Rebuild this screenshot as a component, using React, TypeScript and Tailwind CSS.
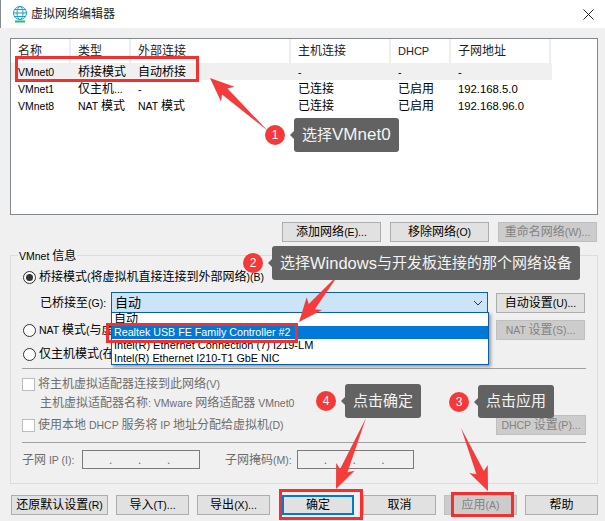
import React from 'react';

const rows = [
  ['VMnet0', '桥接模式', '自动桥接', '-', '-', '-'],
  ['VMnet1', '仅主机...', '-', '已连接', '已启用', '192.168.5.0'],
  ['VMnet8', 'NAT 模式', 'NAT 模式', '已连接', '已启用', '192.168.96.0'],
];

const headers = ['名称', '类型', '外部连接', '主机连接', 'DHCP', '子网地址'];
const colWidths = ['w-[60px]', 'w-[60px]', 'w-[160px]', 'w-[100px]', 'w-[60px]', 'w-[100px]'];

// latin runs render narrower than the CJK around them in the reference
const mix = (text: string) =>
  text.split(/([\x20-\x7e]+)/).map((part, i) =>
    i % 2 === 1 ? (
      <span key={i} className="text-[10.5px]">
        {part}
      </span>
    ) : (
      part
    )
  );

const Btn = ({ label, className = '', disabled = false }: { label: string; className?: string; disabled?: boolean }) => (
  <div
    className={`flex items-center justify-center border whitespace-pre shrink-0 ${
      disabled ? 'bg-[#cccccc] border-[#bfbfbf] text-[#838383]' : 'bg-[#e1e1e1] border-[#adadad] text-black'
    } ${className}`}
  >
    <span>{mix(label)}</span>
  </div>
);

const Radio = ({ checked = false }: { checked?: boolean }) => (
  <span className="w-[13px] h-[13px] rounded-full border border-[#333333] bg-white flex items-center justify-center shrink-0">
    {checked && <span className="w-[7px] h-[7px] rounded-full bg-[#333333]" />}
  </span>
);

const Check = () => <span className="w-[13px] h-[13px] border border-[#bcbcbc] bg-white shrink-0" />;

const IpInput = ({ className = '' }: { className?: string }) => (
  <div className={`h-[19px] border border-[#7a7a7a] bg-[#f0f0f0] grid grid-cols-4 text-[#6d6d6d] ${className}`}>
    <span />
    <span className="-ml-[3px] leading-[19px]">.</span>
    <span className="-ml-[3px] leading-[19px]">.</span>
    <span className="-ml-[3px] leading-[19px]">.</span>
  </div>
);

const arrow = (x0: number, y0: number, x1: number, y1: number) => {
  const len = Math.hypot(x1 - x0, y1 - y0);
  const ux = (x1 - x0) / len;
  const uy = (y1 - y0) / len;
  const nx = -uy;
  const ny = ux;
  const pt = (back: number, side: number) => `${x1 - ux * back + nx * side},${y1 - uy * back + ny * side}`;
  return [`${x0},${y0}`, pt(20, 4), pt(24, 10), `${x1},${y1}`, pt(24, -10), pt(20, -4)].join(' ');
};

const Bubble = ({ n, children, className }: { n: number; children: React.ReactNode; className: string }) => (
  <div className={`absolute flex items-center ${className}`}>
    <span className="w-[20px] h-[20px] rounded-full bg-[#f53838] text-white text-[12px] flex items-center justify-center shrink-0">
      {n}
    </span>
    <span className="ml-[5px] w-0 h-0 border-y-[4px] border-y-transparent border-r-[4px] border-r-[#626262]" />
    <span className="h-full flex items-center px-[8px] rounded-[3px] bg-[#626262] text-[#f4f4f4] text-[15px] whitespace-nowrap">
      {children}
    </span>
  </div>
);

export default function App() {
  return (
    <div className="relative w-[605px] h-[521px] overflow-hidden bg-[#f0f0f0] text-[12px] text-black font-['Liberation_Sans','Noto_Sans_CJK_SC',sans-serif]">
      {/* Title bar */}
      <div className="h-[28px] bg-white flex items-center pl-[11px] pr-[11px] border-l border-[#8a8a8a]">
        <svg width="16" height="17" viewBox="0 0 16 17" fill="none" stroke="#1a9fc9" strokeWidth="1">
          <circle cx="8" cy="7" r="6.5" />
          <ellipse cx="8" cy="7" rx="3" ry="6.5" />
          <path d="M1.5 7h13M2.5 3.5h11M2.5 10.5h11" />
          <path d="M3 15.5h10" stroke="#2bb673" strokeWidth="2" />
        </svg>
        <span className="ml-[3px] text-[12px] text-[#222222]">虚拟网络编辑器</span>
        <svg className="ml-auto" width="11" height="11" viewBox="0 0 11 11" stroke="#222222" strokeWidth="1">
          <path d="M0.5 0.5l10 10M10.5 0.5l-10 10" />
        </svg>
      </div>

      <div className="pl-[10px] pr-[7px] pt-[10px]">
        {/* Network list */}
        <div className="h-[177px] border border-[#828790] bg-white">
          <div className="flex h-[24px] w-[541px]">
            {headers.map((h, i) => (
              <div key={h} className={`${colWidths[i]} border-r-2 border-[#eeeeee] pl-[7px] flex items-center text-[#222222]`}>
                <span>{h === 'DHCP' ? <span className="text-[11px]">{h}</span> : h}</span>
              </div>
            ))}
          </div>
          {rows.map((r, ri) => (
            <div key={r[0]} className={`flex h-[17px] w-[541px] items-center ${ri === 0 ? 'bg-[#f0f0f0]' : ''}`}>
              {r.map((c, i) => (
                <div key={i} className={`${colWidths[i]} pl-[7px] pt-[1px] whitespace-pre leading-[16px]`}>
                  {i === 5 ? <span className="text-[11.3px]">{c}</span> : mix(c)}
                </div>
              ))}
            </div>
          ))}
        </div>

        {/* List actions */}
        <div className="flex justify-end gap-[9px] mt-[7px] pr-[1px]">
          <Btn label="添加网络(E)..." className="w-[99px] h-[20px]" />
          <Btn label="移除网络(O)" className="w-[99px] h-[20px]" />
          <Btn label="重命名网络(W)..." className="w-[99px] h-[20px]" disabled />
        </div>

        {/* VMnet info group */}
        <div className="relative mt-[13px] h-[229px] border border-[#dcdcdc] pl-[11px] pr-[11px]">
          <span className="absolute -top-[8px] left-[7px] px-[1px] bg-[#f0f0f0] leading-[16px] whitespace-pre">{mix('VMnet 信息')}</span>

          <div className="flex items-center gap-[3px] h-[16px] mt-[13px] ml-[1px]">
            <Radio checked />
            <span className="whitespace-pre">{mix('桥接模式(将虚拟机直接连接到外部网络)(B)')}</span>
          </div>

          <div className="flex items-center h-[21px] mt-[7px]">
            <span className="w-[89px] pl-[18px] whitespace-pre">{mix('已桥接至(G):')}</span>
            <div className="w-[377px] h-[21px] border border-[#0b5fa8] bg-[#cce4f7] flex items-center pl-[3px] text-[13px]">
              自动
              <svg className="ml-auto mr-[4px]" width="10" height="6" viewBox="0 0 10 6" fill="none" stroke="#333333">
                <path d="M1 1l4 4 4-4" />
              </svg>
            </div>
            <Btn label="自动设置(U)..." className="w-[89px] h-[20px] ml-[8px]" />
          </div>

          <div className="flex items-center h-[20px] mt-[7px] ml-[1px]">
            <Radio />
            <span className="ml-[3px] whitespace-pre">{mix('NAT 模式(与虚')}</span>
            <Btn label="NAT 设置(S)..." className="w-[89px] h-[20px] ml-auto mr-[1px]" disabled />
          </div>

          <div className="flex items-center gap-[3px] h-[16px] mt-[6px] ml-[1px]">
            <Radio />
            <span className="whitespace-pre">{mix('仅主机模式(在')}</span>
          </div>

          <div className="border-t border-[#a0a0a0] mt-[6px]" />

          <div className="flex items-center gap-[3px] h-[16px] mt-[7px] text-[#6d6d6d]">
            <Check />
            <span className="whitespace-pre">{mix('将主机虚拟适配器连接到此网络(V)')}</span>
          </div>
          <div className="pl-[18px] mt-[3px] h-[16px] leading-[16px] text-[#6d6d6d] whitespace-pre">
            {mix('主机虚拟适配器名称: VMware 网络适配器 VMnet0')}
          </div>

          <div className="flex items-center h-[20px] mt-[4px] text-[#6d6d6d]">
            <Check />
            <span className="ml-[3px] whitespace-pre">{mix('使用本地 DHCP 服务将 IP 地址分配给虚拟机(D)')}</span>
            <Btn label="DHCP 设置(P)..." className="w-[90px] h-[20px] ml-auto" disabled />
          </div>

          <div className="border-t border-[#a0a0a0] mt-[7px]" />

          <div className="flex items-center mt-[7px] text-[#6d6d6d]">
            <span className="w-[60px] whitespace-pre">{mix('子网 IP (I):')}</span>
            <IpInput className="w-[118px]" />
            <span className="w-[72px] ml-[25px] whitespace-pre">{mix('子网掩码(M):')}</span>
            <IpInput className="w-[117px]" />
          </div>
        </div>

        {/* Footer buttons */}
        <div className="flex mt-[11px] ml-[1px]">
          <Btn label="还原默认设置(R)" className="w-[97px] h-[20px]" />
          <Btn label="导入(T)..." className="w-[73px] h-[20px] ml-[8px]" />
          <Btn label="导出(X)..." className="w-[73px] h-[20px] ml-[8px]" />
          <Btn label="确定" className="w-[72px] h-[20px] ml-[12px] !border-2 !border-[#0078d7]" />
          <Btn label="取消" className="w-[73px] h-[20px] ml-[9px]" />
          <Btn label="应用(A)" className="w-[73px] h-[20px] ml-[8px]" disabled />
          <Btn label="帮助" className="w-[73px] h-[20px] ml-[8px]" />
        </div>
      </div>

      {/* Open combo dropdown */}
      <div className="absolute left-[111px] top-[312px] w-[378px] h-[53px] border border-[#0b5fa8] bg-white shadow-[2px_2px_3px_rgba(0,0,0,0.35)] text-[11px] leading-[13px]">
        <div className="h-[13px] pl-[2px] text-[12px]">自动</div>
        <div className="h-[13px] pl-[2px] bg-[#0078d7] text-white whitespace-pre text-[10.7px]">Realtek USB FE Family Controller #2</div>
        <div className="h-[13px] pl-[2px] whitespace-nowrap">Intel(R) Ethernet Connection (7) I219-LM</div>
        <div className="h-[13px] pl-[2px] whitespace-nowrap text-[10.8px]">Intel(R) Ethernet I210-T1 GbE NIC</div>
      </div>

      {/* Annotations */}
      <div className="absolute left-[15px] top-[56px] w-[184px] h-[26px] border-[3px] border-[#f23030]" />
      <div className="absolute left-[106px] top-[323px] w-[192px] h-[20px] border-[3px] border-[#f23030]" />
      <div className="absolute left-[279px] top-[489px] w-[84px] h-[31px] border-[3px] border-[#f23030]" />
      <div className="absolute left-[451px] top-[492px] w-[63px] h-[25px] border-[3px] border-[#f23030]" />

      <svg className="absolute left-0 top-0" width="605" height="521" fill="#f53c3c">
        <polygon points={arrow(268, 131, 210, 78)} />
        <polygon points={arrow(339, 274, 299, 322)} />
        <polygon points={arrow(366, 418, 336, 489)} />
        <polygon points={arrow(461, 428, 488, 491)} />
      </svg>

      <Bubble n={1} className="left-[265px] top-[118px] h-[34px]">
        选择<span className="text-[17px]">VMnet0</span>
      </Bubble>
      <Bubble n={2} className="left-[243px] top-[246px] h-[34px]">
        选择<span className="text-[16.5px]">Windows</span>与开发板连接的那个网络设备
      </Bubble>
      <Bubble n={4} className="left-[316px] top-[384px] h-[34px]">
        点击确定
      </Bubble>
      <Bubble n={3} className="left-[449px] top-[385px] h-[33px]">
        点击应用
      </Bubble>
    </div>
  );
}
